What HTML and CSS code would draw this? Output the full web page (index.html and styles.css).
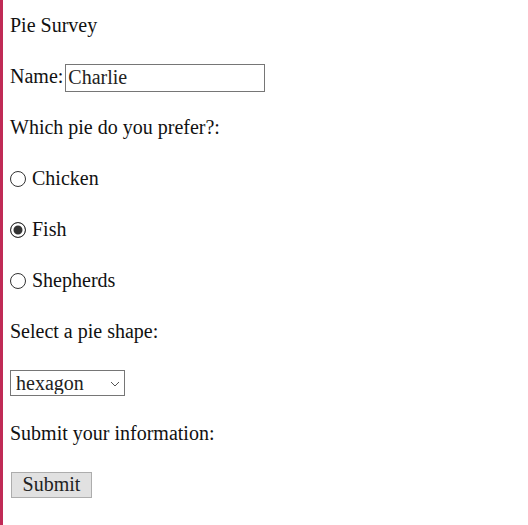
FILE: index.html
```html
<!DOCTYPE html>
<html lang="en">
<head>
  <meta charset="UTF-8">
  <meta name="viewport" content="width=device-width, initial-scale=1.0">
  <title>Pie Survey</title>
  <link rel="stylesheet" href="styles.css">
</head>
<body>

  <form class="survey">
    <p class="row">Pie Survey</p>

    <p class="row">
      <label for="name">Name:</label><input type="text" id="name" class="name-input" value="Charlie" />
    </p>

    <p class="row">Which pie do you prefer?:</p>

    <p class="row">
      <input type="radio" id="chicken" name="pie" value="chicken" />
      <label for="chicken">Chicken</label>
    </p>
    <p class="row">
      <input type="radio" id="fish" name="pie" value="fish" checked />
      <label for="fish">Fish</label>
    </p>
    <p class="row">
      <input type="radio" id="shepherds" name="pie" value="shepherds" />
      <label for="shepherds">Shepherds</label>
    </p>

    <p class="row">Select a pie shape:</p>

    <p class="row">
      <span class="select-wrap">
        <select id="shape" class="shape-select">
          <option>circle</option>
          <option>square</option>
          <option selected>hexagon</option>
        </select>
        <svg class="chevron" width="10" height="6" viewBox="0 0 10 6">
          <path d="M1 1 L5 5 L9 1" fill="none" stroke="#555" stroke-width="1"/>
        </svg>
      </span>
    </p>

    <p class="row">Submit your information:</p>

    <p class="row">
      <button type="button" class="submit-btn">Submit</button>
    </p>
  </form>

</body>
</html>
```

FILE: styles.css
```css
html {
  background-color: #ffffff;
}
body {
  font-family: "Liberation Serif", "Times New Roman", serif;
  font-size: 20px;
  color: #111;
  margin: 0;
  min-height: 525px;
  box-sizing: border-box;
  border-left: 3px solid #c02a56;
  padding: 10px 0 0 7px;
}
.row {
  display: flex;
  align-items: center;
  height: 31px;
  margin: 0 0 20px 0;
}
.name-input {
  font-family: inherit;
  font-size: 20px;
  width: 200px;
  height: 28px;
  box-sizing: border-box;
  margin: 0 0 0 2px;
  padding: 0 2px;
  border: 1px solid #767676;
  color: #222;
  position: relative;
  top: 1px;
}
input[type="radio"] {
  appearance: none;
  width: 16px;
  height: 16px;
  margin: 0 6px 0 0;
  border: 1px solid #333;
  border-radius: 50%;
  background: #fff;
}
input[type="radio"]:checked {
  border: 1.5px solid #333;
  background: #333;
  box-shadow: inset 0 0 0 2.5px #fff;
}
.select-wrap {
  position: relative;
  display: inline-block;
  height: 26px;
}
.shape-select {
  appearance: none;
  font-family: inherit;
  font-size: 20px;
  width: 115px;
  height: 26px;
  border: 1px solid #767676;
  border-radius: 0;
  background: #fff;
  color: #222;
  padding: 0 0 0 5px;
  margin: 0;
}
.chevron {
  position: absolute;
  right: 5px;
  top: 11px;
  pointer-events: none;
}
.submit-btn {
  font-family: inherit;
  font-size: 20px;
  width: 81px;
  height: 26px;
  margin-left: 1px;
  padding: 0;
  background: #e1e1e1;
  border: 1px solid #adadad;
  border-radius: 0;
  color: #222;
}
```
